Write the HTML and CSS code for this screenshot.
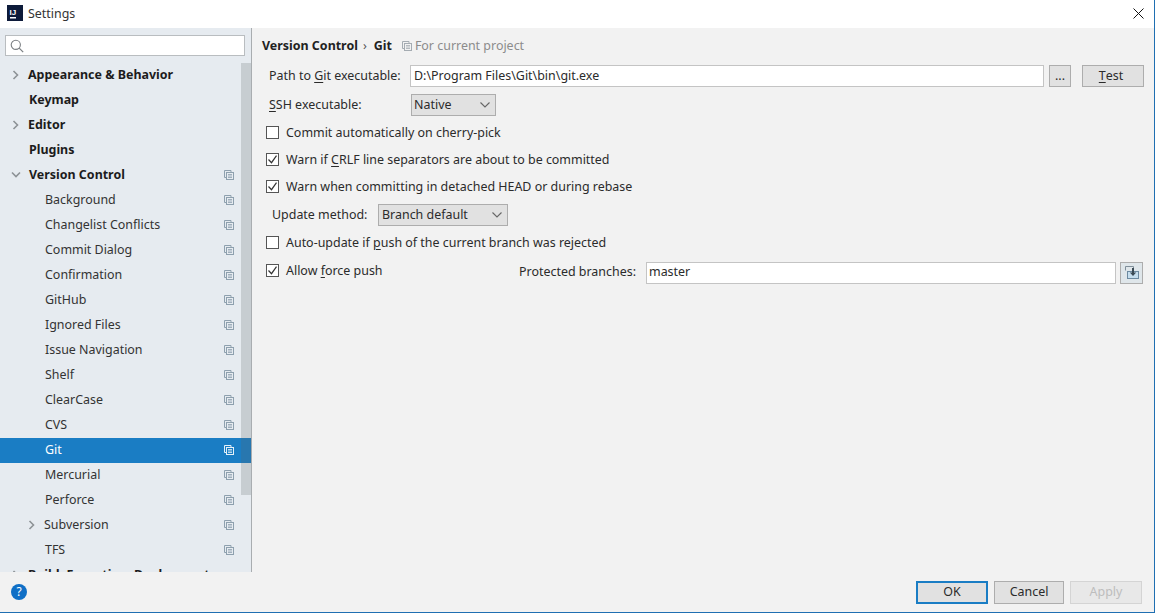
FILE: index.html
```html
<!DOCTYPE html>
<html lang="en">
<head>
<meta charset="utf-8">
<title>Settings</title>
<link rel="stylesheet" href="styles.css">
</head>
<body>
<svg class="defs" width="0" height="0" aria-hidden="true">
  <symbol id="copy" viewBox="0 0 10 10">
    <path d="M2.5 7.5H.5V.5h6.5v2" fill="none" stroke="currentColor"/>
    <rect x="2.5" y="2.5" width="7" height="7" fill="none" stroke="currentColor"/>
    <path d="M4 4.5h4M4 6h4M4 7.5h4" stroke="currentColor" stroke-width=".8"/>
  </symbol>
  <symbol id="right" viewBox="0 0 8 10"><path d="M1.5 1l4 4-4 4" fill="none" stroke="currentColor" stroke-width="1.6"/></symbol>
  <symbol id="down" viewBox="0 0 10 8"><path d="M1 1.5l4 4 4-4" fill="none" stroke="currentColor" stroke-width="1.6"/></symbol>
  <symbol id="chev" viewBox="0 0 10 6"><path d="M.5 .5l4.5 4.5 4.5-4.5" fill="none" stroke="currentColor" stroke-width="1.1"/></symbol>
  <symbol id="tick" viewBox="0 0 13 13"><path d="M2.5 6.5l3 3.2 5-7" fill="none" stroke="currentColor" stroke-width="1.2"/></symbol>
</svg>
<div class="window">
  <header class="titlebar">
    <svg class="logo" width="16" height="16" viewBox="0 0 16 16"><rect width="16" height="16" fill="#0d1b3a"/><rect x="3" y="12" width="6" height="1.5" fill="#fff"/><text x="2.6" y="9.5" class="logo-text">IJ</text></svg>
    <span class="title">Settings</span>
    <svg class="close" width="11" height="11" viewBox="0 0 11 11"><path d="M.5 .5l10 10M10.5 .5l-10 10" stroke="#111" stroke-width="1"/></svg>
  </header>
  <div class="body">
    <aside class="sidebar">
      <div class="search">
        <svg width="14" height="14" viewBox="0 0 14 14"><circle cx="5.8" cy="5.8" r="4.6" fill="none" stroke="#7b7f83" stroke-width="1.1"/><path d="M9.2 9.2l4 4" stroke="#7b7f83" stroke-width="1.2"/></svg>
      </div>
      <div class="tree">
        <div class="scrollbar"></div>
        <div class="row top arrow"><svg class="tw" width="8" height="10"><use href="#right"/></svg><span>Appearance &amp; Behavior</span></div>
        <div class="row top"><span>Keymap</span></div>
        <div class="row top arrow"><svg class="tw" width="8" height="10"><use href="#right"/></svg><span>Editor</span></div>
        <div class="row top"><span>Plugins</span></div>
        <div class="row top arrow"><svg class="tw twd" width="10" height="8"><use href="#down"/></svg><span>Version Control</span><svg class="cp" width="10" height="10"><use href="#copy"/></svg></div>
        <div class="row sub"><span>Background</span><svg class="cp" width="10" height="10"><use href="#copy"/></svg></div>
        <div class="row sub"><span>Changelist Conflicts</span><svg class="cp" width="10" height="10"><use href="#copy"/></svg></div>
        <div class="row sub"><span>Commit Dialog</span><svg class="cp" width="10" height="10"><use href="#copy"/></svg></div>
        <div class="row sub"><span>Confirmation</span><svg class="cp" width="10" height="10"><use href="#copy"/></svg></div>
        <div class="row sub"><span>GitHub</span><svg class="cp" width="10" height="10"><use href="#copy"/></svg></div>
        <div class="row sub"><span>Ignored Files</span><svg class="cp" width="10" height="10"><use href="#copy"/></svg></div>
        <div class="row sub"><span>Issue Navigation</span><svg class="cp" width="10" height="10"><use href="#copy"/></svg></div>
        <div class="row sub"><span>Shelf</span><svg class="cp" width="10" height="10"><use href="#copy"/></svg></div>
        <div class="row sub"><span>ClearCase</span><svg class="cp" width="10" height="10"><use href="#copy"/></svg></div>
        <div class="row sub"><span>CVS</span><svg class="cp" width="10" height="10"><use href="#copy"/></svg></div>
        <div class="row sub selected"><span>Git</span><svg class="cp" width="10" height="10"><use href="#copy"/></svg></div>
        <div class="row sub"><span>Mercurial</span><svg class="cp" width="10" height="10"><use href="#copy"/></svg></div>
        <div class="row sub"><span>Perforce</span><svg class="cp" width="10" height="10"><use href="#copy"/></svg></div>
        <div class="row sub subarrow"><svg class="tw" width="8" height="10"><use href="#right"/></svg><span>Subversion</span><svg class="cp" width="10" height="10"><use href="#copy"/></svg></div>
        <div class="row sub"><span>TFS</span><svg class="cp" width="10" height="10"><use href="#copy"/></svg></div>
        <div class="row top arrow"><svg class="tw" width="8" height="10"><use href="#right"/></svg><span>Build, Execution, Deployment</span></div>
      </div>
    </aside>
    <main class="content">
      <div class="crumbs">
        <b>Version Control</b><span class="sep">›</span><b>Git</b>
        <svg class="crumb-icon" width="10" height="10"><use href="#copy"/></svg>
        <span class="hint">For current project</span>
      </div>
      <div class="line path-line">
        <label class="path-label">Path to <u>G</u>it executable:</label>
        <div class="field grow">D:\Program Files\Git\bin\git.exe</div>
        <button class="btn dots">...</button>
        <button class="btn test"><u>T</u>est</button>
      </div>
      <div class="line ssh-line">
        <label class="ssh-label"><u>S</u>SH executable:</label>
        <div class="select native">Native<svg width="10" height="6"><use href="#chev"/></svg></div>
      </div>
      <div class="check first"><span class="box"></span><span>Commit automatically on cherry-pick</span></div>
      <div class="check"><span class="box"><svg width="13" height="13"><use href="#tick"/></svg></span><span>Warn if <u>C</u>RLF line separators are about to be committed</span></div>
      <div class="check"><span class="box"><svg width="13" height="13"><use href="#tick"/></svg></span><span>Warn when committing in detached HEAD or during rebase</span></div>
      <div class="line update-line">
        <label class="update-label">Update method:</label>
        <div class="select branch">Branch default<svg width="10" height="6"><use href="#chev"/></svg></div>
      </div>
      <div class="check auto"><span class="box"></span><span>Auto-update if <u>p</u>ush of the current branch was rejected</span></div>
      <div class="line force-line">
        <div class="check inline"><span class="box"><svg width="13" height="13"><use href="#tick"/></svg></span><span>Allow <u>f</u>orce push</span></div>
        <label class="prot-label">Protected branches:</label>
        <div class="field grow master">master</div>
        <button class="btn load">
          <svg width="16" height="16" viewBox="0 0 16 16"><path d="M1.5 5.5V1.5h8v2" fill="none" stroke="#7f8e99"/><rect x="3.5" y="6.5" width="11" height="7" fill="#c6deee" stroke="#6d8aa0"/><path d="M9 3v6" stroke="#3b4a55" stroke-width="2"/><path d="M5.8 7.5h6.4L9 11z" fill="#3b4a55"/></svg>
        </button>
      </div>
    </main>
  </div>
  <footer class="footer">
    <span class="help">?</span>
    <div class="actions">
      <button class="btn act ok">OK</button>
      <button class="btn act">Cancel</button>
      <button class="btn act disabled">Apply</button>
    </div>
  </footer>
</div>
</body>
</html>
```
FILE: styles.css
```css
* { box-sizing: border-box; }
html, body { margin: 0; height: 100%; }
body {
  width: 1156px;
  height: 614px;
  overflow: hidden;
  background: #fff;
  font: 12.45px/18px "Noto Sans", "Open Sans", sans-serif;
  color: #2b2b2b;
}
.defs { display: block; height: 0; }
u { text-underline-offset: 2px; }
.window {
  width: 1155px;
  height: 613px;
  display: flex;
  flex-direction: column;
  background: #f2f2f2;
  border-right: 1px solid #1f6fb2;
  border-bottom: 1px solid #1f6fb2;
}
.titlebar {
  height: 28px;
  flex: none;
  display: flex;
  align-items: center;
  background: #fff;
  padding: 0 10px 2px 7px;
}
.logo { flex: none; }
.logo-text { font: bold 8px "Liberation Sans", sans-serif; fill: #fff; }
.title { margin: 2px 0 0 5px; color: #333; }
.close { margin-left: auto; }
.body { flex: 1; display: flex; min-height: 0; }
.sidebar {
  width: 252px;
  flex: none;
  background: #e6ebf0;
  border-right: 1px solid #a9adb0;
  display: flex;
  flex-direction: column;
  overflow: hidden;
}
.search {
  margin: 7px 6px 7px 5px;
  height: 21px;
  flex: none;
  background: #fff;
  border: 1px solid #b9bdc0;
  display: flex;
  align-items: center;
  padding-left: 4px;
}
.tree { position: relative; flex: 1; overflow: hidden; }
.scrollbar {
  position: absolute;
  z-index: 2;
  right: 0;
  top: 0;
  width: 10px;
  height: 432px;
  background: rgba(90, 100, 100, .22);
}
.row {
  height: 25px;
  display: flex;
  align-items: center;
  position: relative;
  padding-right: 17px;
  padding-bottom: 1px;
  color: #333;
}
.row .cp { margin-left: auto; color: #8ea0ae; }
.top { font-weight: 700; color: #1c1c1c; padding-left: 29px; }
.top.arrow { padding-left: 12px; }
.top.arrow span { margin-left: 8px; }
.top .twd { margin-left: -1px; }
.top .twd + span { margin-left: 8px; }
.tw { color: #8d9296; flex: none; }
.sub { padding-left: 45px; }
.sub.subarrow { padding-left: 28px; }
.subarrow span { margin-left: 8px; }
.selected { background: #1a7dc4; color: #fff; }
.selected .cp { color: #e4f0f8; }
.content {
  flex: 1;
  min-width: 0;
  padding: 7px 10px 0 10px;
  display: flex;
  flex-direction: column;
}
.crumbs { display: flex; align-items: center; height: 18px; margin-top: 2px; color: #222; }
.crumbs b { font-weight: 700; }
.sep { margin: 0 7px 0 5px; color: #555; }
.crumb-icon { margin-left: 10px; color: #a5acb2; }
.hint { margin-left: 3px; color: #8c8c8c; }
.line { display: flex; align-items: center; }
.field {
  height: 22px;
  background: #fff;
  border: 1px solid #c4c4c4;
  padding: 1px 3px;
  line-height: 18px;
  color: #2b2b2b;
}
.master { padding: 0 2px; }
.grow { flex: 1; min-width: 0; }
.btn {
  font: inherit;
  color: #2b2b2b;
  background: #e1e1e1;
  border: 1px solid #adadad;
  padding: 0;
  height: 22px;
  display: flex;
  align-items: center;
  justify-content: center;
}
.path-line { margin-top: 10px; padding-left: 7px; }
.path-label { width: 141px; flex: none; }
.dots { width: 22px; margin-left: 5px; flex: none; }
.test { width: 62px; margin-left: 11px; flex: none; padding-right: 4px; }
.ssh-line { margin-top: 7px; padding-left: 7px; }
.ssh-label { width: 142px; flex: none; }
.select {
  height: 22px;
  background: #e1e1e1;
  border: 1px solid #adadad;
  padding: 0 2px 0 3px;
  display: flex;
  align-items: center;
  justify-content: space-between;
  flex: none;
}
.select svg { margin-right: 3px; color: #666; }
.native { width: 85px; padding-left: 2px; }
.branch { width: 130px; }
.check { display: flex; align-items: center; height: 27px; padding-left: 4px; }
.check.first { margin-top: 3px; }
.box {
  width: 13px;
  height: 13px;
  flex: none;
  background: #fff;
  border: 1px solid #555;
  margin-right: 7px;
  display: block;
  position: relative;
  color: #333;
}
.box svg { position: absolute; left: -1px; top: -1px; }
.update-line { margin-top: 4px; padding-left: 10px; }
.update-label { width: 106px; flex: none; }
.check.auto { margin-top: 3px; }
.force-line { margin-top: 5px; padding-right: 1px; }
.check.inline { width: 257px; flex: none; margin-top: -4px; }
.prot-label { width: 127px; flex: none; padding-bottom: 2px; }
.load { width: 23px; margin-left: 4px; flex: none; background: #dfe6ea; }
.footer {
  height: 40px;
  flex: none;
  display: flex;
  align-items: center;
  padding: 0 12px 0 11px;
  background: #f2f2f2;
}
.help {
  width: 16px;
  height: 16px;
  border-radius: 50%;
  background: #0f6fc6;
  color: #fff;
  font-size: 12px;
  line-height: 16px;
  text-align: center;
}
.actions { margin-left: auto; display: flex; gap: 6px; }
.act { width: 70px; height: 23px; }
.ok { width: 72px; border: 2px solid #1a7dc4; }
.disabled { width: 72px; color: #bdbdbd; background: #e8e8e8; border-color: #d4d4d4; }
```
